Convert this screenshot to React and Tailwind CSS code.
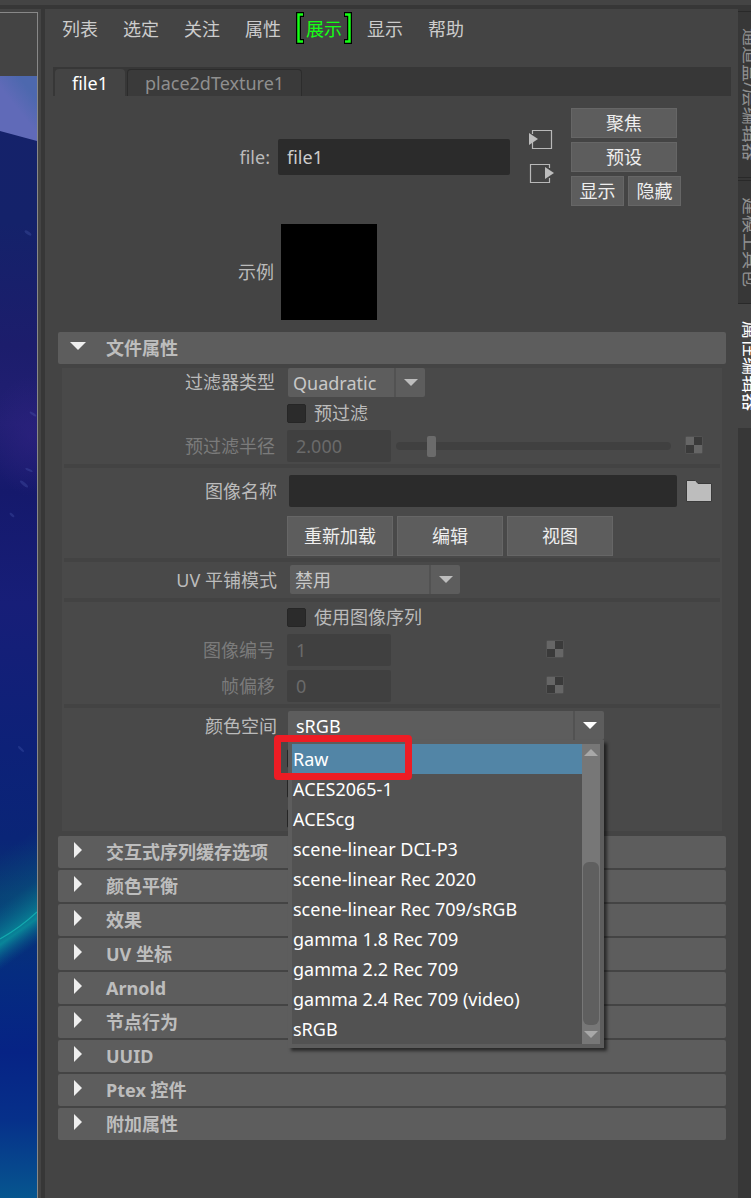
import React from "react";

const MENU = ["列表", "选定", "关注", "属性", "展示", "显示", "帮助"];

const COLOR_SPACES = [
  "Raw",
  "ACES2065-1",
  "ACEScg",
  "scene-linear DCI-P3",
  "scene-linear Rec 2020",
  "scene-linear Rec 709/sRGB",
  "gamma 1.8 Rec 709",
  "gamma 2.2 Rec 709",
  "gamma 2.4 Rec 709 (video)",
  "sRGB",
];

const SECTIONS = [
  "交互式序列缓存选项",
  "颜色平衡",
  "效果",
  "UV 坐标",
  "Arnold",
  "节点行为",
  "UUID",
  "Ptex 控件",
  "附加属性",
];

function Scene() {
  return (
    <svg className="block h-0 w-full grow" viewBox="0 0 37 1122" preserveAspectRatio="xMidYMin slice" aria-hidden="true">
      <defs>
        <linearGradient id="sky" x1="0" y1="0" x2="0" y2="1">
          <stop offset="0" stopColor="#15226a" />
          <stop offset="0.13" stopColor="#14226a" />
          <stop offset="0.24" stopColor="#1c1d6c" />
          <stop offset="0.31" stopColor="#221f74" />
          <stop offset="0.37" stopColor="#15196c" />
          <stop offset="0.47" stopColor="#171e78" />
          <stop offset="0.6" stopColor="#0d2178" />
          <stop offset="0.68" stopColor="#0a2577" />
          <stop offset="0.73" stopColor="#083673" />
          <stop offset="0.8" stopColor="#052c80" />
          <stop offset="0.87" stopColor="#062385" />
          <stop offset="0.93" stopColor="#06308a" />
          <stop offset="1" stopColor="#06568f" />
        </linearGradient>
        <linearGradient id="top" x1="0" y1="0.7" x2="0.5" y2="0">
          <stop offset="0.5" stopColor="#606ab8" />
          <stop offset="1" stopColor="#4d68ae" />
        </linearGradient>
        <linearGradient id="glow" gradientUnits="userSpaceOnUse" x1="0" y1="770" x2="13" y2="885">
          <stop offset="0" stopColor="#0a6f86" stopOpacity="0" />
          <stop offset="0.45" stopColor="#08788a" stopOpacity="0.25" />
          <stop offset="0.78" stopColor="#0a9aa0" stopOpacity="0.8" />
          <stop offset="1" stopColor="#08608c" stopOpacity="0" />
        </linearGradient>
        <radialGradient id="haze">
          <stop offset="0" stopColor="#2e2280" stopOpacity="0.6" />
          <stop offset="1" stopColor="#2e2280" stopOpacity="0" />
        </radialGradient>
      </defs>
      <rect width="37" height="1122" fill="url(#sky)" />
      <ellipse cx="30" cy="360" rx="40" ry="60" fill="url(#haze)" />
      <path d="M0 0H37V65L0 55Z" fill="url(#top)" />
      <g transform="matrix(1 -0.6 0 1 0 8)">
        <rect y="765" width="37" height="125" fill="url(#glow)" />
      </g>
      <path d="M0 863Q20 852 37 836" stroke="#13a9ae" strokeWidth="1.2" fill="none" />
      <g fill="#5b6fc4" opacity="0.25">
        <ellipse cx="28" cy="157" rx="4" ry="1.5" transform="rotate(35 28 157)" />
        <ellipse cx="33" cy="338" rx="4" ry="1.2" transform="rotate(35 33 338)" />
        <ellipse cx="24" cy="408" rx="5" ry="1.5" transform="rotate(40 24 408)" />
        <ellipse cx="29" cy="394" rx="4" ry="1.2" transform="rotate(25 29 394)" />
        <ellipse cx="12" cy="439" rx="3" ry="1.2" transform="rotate(40 12 439)" />
        <ellipse cx="21" cy="673" rx="4" ry="1.2" transform="rotate(45 21 673)" />
      </g>
    </svg>
  );
}

function Select({ id, value, options, className, active }) {
  return (
    <div className={"relative h-[29px] " + className}>
      <select
        id={id}
        defaultValue={value}
        className={
          "h-[29px] w-full appearance-none rounded-xs bg-[#5d5d5d] pr-9 outline-none " +
          (active ? "pl-2 text-white" : "pl-[5px] text-[#c8c8c8]")
        }
      >
        {options.map((o) => (
          <option key={o}>{o}</option>
        ))}
      </select>
      <span className="pointer-events-none absolute inset-y-0 right-0 flex w-[31px] items-center justify-center border-l-2 border-[#525252]">
        <svg width="14" height="7" viewBox="0 0 14 7" aria-hidden="true">
          <path d="M0 0H14L7 7Z" fill={active ? "#ffffff" : "#bdbdbd"} />
        </svg>
      </span>
    </div>
  );
}

function Checker() {
  return (
    <svg className="mb-[3px]" width="18" height="18" viewBox="0 0 18 18" aria-hidden="true">
      <rect width="18" height="18" rx="2" fill="#525252" />
      <rect x="1" y="1" width="8" height="8" fill="#666666" />
      <rect x="9" y="1" width="8" height="8" fill="#3a3a3a" />
      <rect x="1" y="9" width="8" height="8" fill="#3a3a3a" />
      <rect x="9" y="9" width="8" height="8" fill="#666666" />
    </svg>
  );
}

function Separator() {
  return <div className="mx-0.5 h-1 bg-[#434343]" />;
}

function Button({ children, className }) {
  return (
    <button type="button" className={"border border-[#666666] bg-[#5d5d5d] text-center text-[#eeeeee] " + className}>
      {children}
    </button>
  );
}

function Check({ id, label }) {
  return (
    <div className="flex items-center gap-2 pl-[225px]">
      <input id={id} type="checkbox" className="size-[19px] appearance-none rounded-xs border border-[#262626] bg-[#2b2b2b]" />
      <label htmlFor={id}>{label}</label>
    </div>
  );
}

function DisabledField({ id, label, value, children }) {
  return (
    <div className="flex h-8 items-center">
      <label htmlFor={id} className="w-[213px] shrink-0 text-right text-[#7b7b7b]">
        {label}
      </label>
      <input
        id={id}
        disabled
        defaultValue={value}
        className="ml-3 h-8 w-[104px] shrink-0 rounded-xs bg-[#404040] px-[9px] text-[#6a6a6a]"
      />
      {children}
    </div>
  );
}

function SectionHeader({ title, open }) {
  return (
    <button
      type="button"
      aria-expanded={!!open}
      className="flex h-8 w-full items-center rounded-xs bg-[#5d5d5d] text-left font-bold text-[#bdbdbd]"
    >
      <span className="flex h-8 w-12 items-center pb-1 pl-3">
        {open ? (
          <svg width="16" height="8" viewBox="0 0 16 8" aria-hidden="true">
            <path d="M0 0H16L8 8Z" fill="#eeeeee" />
          </svg>
        ) : (
          <svg width="16" height="16" viewBox="0 0 16 16" aria-hidden="true">
            <path d="M4 0V16L12 8Z" fill="#eeeeee" />
          </svg>
        )}
      </span>
      <span>{title}</span>
    </button>
  );
}

function ColorSpacePopup() {
  return (
    <div className="absolute inset-x-0 top-full z-10 flex border-4 border-[#5d5d5d] bg-[#525252] shadow-[3px_3px_3px_rgba(0,0,0,0.55)]">
      <ul role="listbox" aria-label="颜色空间" className="min-w-0 grow text-white">
        {COLOR_SPACES.map((name, i) => (
          <li
            key={name}
            role="option"
            aria-selected={i === 0}
            className={"h-[30px] whitespace-nowrap pl-px leading-[30px] " + (i === 0 ? "bg-[#5285a6]" : "")}
          >
            {name}
          </li>
        ))}
      </ul>
      <div className="flex w-[18px] shrink-0 flex-col items-center bg-[#777777] pt-[5px] pb-1.5">
        <svg width="14" height="7" viewBox="0 0 14 7" aria-hidden="true">
          <path d="M0 7H14L7 0Z" fill="#a8a8a8" />
        </svg>
        <div className="mt-[106px] mb-1.5 w-4 grow rounded-md bg-[#5f5f5f]" />
        <svg width="14" height="7" viewBox="0 0 14 7" aria-hidden="true">
          <path d="M0 0H14L7 7Z" fill="#a8a8a8" />
        </svg>
      </div>
      <div className="pointer-events-none absolute -top-[9px] -left-[18px] h-[45px] w-[138px] rounded-[4px] border-7 border-[#ed1c24]" />
    </div>
  );
}

function SideTab({ children, active }) {
  return (
    <button
      type="button"
      className={
        "w-8 shrink-0 border-t border-b pt-4 pr-[7px] pb-4 pl-px text-left leading-6 [text-orientation:sideways] [writing-mode:vertical-rl] " +
        (active ? "border-[#444444] bg-[#444444] text-white" : "border-[#292929] bg-[#373737] text-[#8f8f8f]")
      }
    >
      {children}
    </button>
  );
}

export default function App() {
  return (
    <div className="flex min-h-screen flex-col bg-[#444444] font-['Noto_Sans','Noto_Sans_CJK_SC',sans-serif] text-[18px] leading-6 text-[#bbbbbb]">
      <div className="mt-[5px] h-1 bg-[#373737]" />
      <div className="flex grow">
        <div className="mt-[3px] mr-[3px] flex w-[38px] shrink-0 flex-col border-t border-r border-[#888888] pt-[63px]">
          <Scene />
        </div>
        <div className="w-1 shrink-0 bg-[#373737]" />

        <main className="min-w-0 grow pr-[7px] pl-2">
          <nav className="flex gap-[25px] pt-2 pl-[9px] text-[#cccccc]">
            {MENU.map((m) =>
              m === "展示" ? (
                <button key={m} type="button" className="relative text-[#15ff15]">
                  {m}
                  <svg className="absolute -top-[5px] -left-[10px]" width="56" height="32" viewBox="0 0 56 32" aria-hidden="true">
                    <g fill="none">
                      <path d="M8 2.5H2.5V29.5H8M48 2.5H53.5V29.5H48" stroke="#000000" strokeWidth="5" />
                      <path d="M7 2.5H2.5V29.5H7M49 2.5H53.5V29.5H49" stroke="#15ff15" strokeWidth="2.5" />
                    </g>
                  </svg>
                </button>
              ) : (
                <button key={m} type="button">
                  {m}
                </button>
              )
            )}
          </nav>

          <div className="mt-[26px] flex gap-0.5 bg-[#373737] pt-0.5 pl-0.5">
            <button type="button" className="h-[27px] rounded-t-sm bg-[#444444] px-[17px] text-white">
              file1
            </button>
            <button
              type="button"
              className="h-[27px] rounded-t border border-b-0 border-[#2c2c2c] bg-[#3a3a3a] px-[17px] text-[#8f8f8f]"
            >
              place2dTexture1
            </button>
          </div>

          <div className="flex items-center pt-3 pr-[50px]">
            <label htmlFor="node" className="w-[217px] shrink-0 text-right">
              file:
            </label>
            <input
              id="node"
              defaultValue="file1"
              className="ml-2 h-9 w-0 grow rounded-xs bg-[#2b2b2b] px-[9px] text-[#cccccc]"
            />
            <div className="ml-[19px] flex w-[25px] flex-col gap-3">
              <button type="button" aria-label="输入连接">
                <svg className="block" width="25" height="22" viewBox="0 0 25 22" aria-hidden="true">
                  <path d="M3.5 5V1.5H22.5V19.5H3.5V13" fill="none" stroke="#b8b8b8" strokeWidth="1.2" />
                  <path d="M0 4V16L9 10Z" fill="#bdbdbd" />
                </svg>
              </button>
              <button type="button" aria-label="输出连接">
                <svg className="block" width="25" height="22" viewBox="0 0 25 22" aria-hidden="true">
                  <path d="M20.5 5V1.5H1.5V19.5H20.5V15" fill="none" stroke="#b8b8b8" strokeWidth="1.2" />
                  <path d="M16 4V16L25 10Z" fill="#bdbdbd" />
                </svg>
              </button>
            </div>
            <div className="ml-[17px] w-[110px] shrink-0">
              <Button className="mb-1 block h-[30px] w-[106px]">聚焦</Button>
              <Button className="mb-1 block h-[30px] w-[106px]">预设</Button>
              <div className="flex gap-1">
                <Button className="h-[30px] w-[53px]">显示</Button>
                <Button className="h-[30px] w-[53px]">隐藏</Button>
              </div>
            </div>
          </div>

          <div className="mt-[18px] mb-3 flex items-center gap-[7px]">
            <span className="w-[221px] text-right">示例</span>
            <div className="size-24 bg-black" />
          </div>

          <div className="mx-[5px]">
            <SectionHeader title="文件属性" open />
            <div className="mx-1 mt-1 mb-[5px] bg-[#494949] pb-[3px]">
              <div className="flex">
                <label htmlFor="filter" className="w-[213px] shrink-0 pt-0.5 text-right">
                  过滤器类型
                </label>
                <Select id="filter" value="Quadratic" options={["Quadratic"]} className="ml-[13px] w-[137px]" />
              </div>
              <div className="pt-1 pb-[5px]">
                <Check id="prefilter" label="预过滤" />
              </div>
              <DisabledField id="radius" label="预过滤半径" value="2.000">
                <div className="ml-[5px] flex w-0 max-w-[275px] grow items-center">
                  <input
                    type="range"
                    aria-label="预过滤半径"
                    disabled
                    min="0"
                    max="17"
                    defaultValue="2"
                    className="h-2 w-full appearance-none rounded-sm bg-[#404040] [&::-webkit-slider-thumb]:h-[21px] [&::-webkit-slider-thumb]:w-[9px] [&::-webkit-slider-thumb]:appearance-none [&::-webkit-slider-thumb]:rounded-xs [&::-webkit-slider-thumb]:bg-[#6b6b6b]"
                  />
                </div>
                <span className="mr-[18px] ml-[14px]">
                  <Checker />
                </span>
              </DisabledField>
              <div className="pt-0.5 pb-[7px]">
                <Separator />
              </div>
              <div className="flex items-center">
                <label htmlFor="image" className="w-[215px] shrink-0 text-right">
                  图像名称
                </label>
                <input id="image" className="ml-3 h-8 w-0 grow rounded-xs bg-[#2b2b2b] px-2" />
                <button type="button" aria-label="浏览" className="mr-[10px] ml-[9px]">
                  <svg className="block" width="26" height="22" viewBox="0 0 26 22" aria-hidden="true">
                    <path d="M0.5 0.5H9.5L12 3.5H25.5V21.5H0.5Z" fill="#bdbdbd" stroke="#3a3a3a" />
                  </svg>
                </button>
              </div>
              <div className="flex gap-1 pt-[9px] pb-0.5 pl-[225px]">
                <Button className="h-10 w-[106px]">重新加载</Button>
                <Button className="h-10 w-[106px]">编辑</Button>
                <Button className="h-10 w-[106px]">视图</Button>
              </div>
              <Separator />
              <div className="flex items-center pt-[3px] pb-1">
                <label htmlFor="tiling" className="w-[215px] shrink-0 text-right">
                  UV 平铺模式
                </label>
                <Select id="tiling" value="禁用" options={["禁用"]} className="ml-[13px] w-[170px]" />
              </div>
              <Separator />
              <div className="pt-[3px] pb-[5px]">
                <Check id="sequence" label="使用图像序列" />
              </div>
              <div className="flex flex-col gap-1 pb-0.5">
                <DisabledField id="number" label="图像编号" value="1">
                  <span className="ml-[155px]">
                    <Checker />
                  </span>
                </DisabledField>
                <DisabledField id="offset" label="帧偏移" value="0">
                  <span className="ml-[155px]">
                    <Checker />
                  </span>
                </DisabledField>
              </div>
              <Separator />
              <div className="flex items-center pt-[3px] pb-[6px]">
                <label htmlFor="space" className="w-[215px] shrink-0 text-right">
                  颜色空间
                </label>
                <div className="relative ml-[11px] w-[316px]">
                  <Select id="space" value="sRGB" options={COLOR_SPACES} active className="w-full" />
                  <ColorSpacePopup />
                </div>
              </div>
              <div className="flex flex-col gap-[11px] pt-[3px]">
                <Check id="opt1" label="" />
                <Check id="opt2" label="" />
                <Check id="opt3" label="" />
              </div>
            </div>
            <div className="flex flex-col gap-0.5">
              {SECTIONS.map((s) => (
                <SectionHeader key={s} title={s} />
              ))}
            </div>
          </div>
        </main>

        <aside className="flex w-[13px] shrink-0 flex-col overflow-hidden bg-[#373737] pt-0.5">
          <SideTab>通道盒/层编辑器</SideTab>
          <div className="h-0.5 shrink-0" />
          <SideTab>建模工具包</SideTab>
          <SideTab active>属性编辑器</SideTab>
        </aside>
      </div>
    </div>
  );
}
